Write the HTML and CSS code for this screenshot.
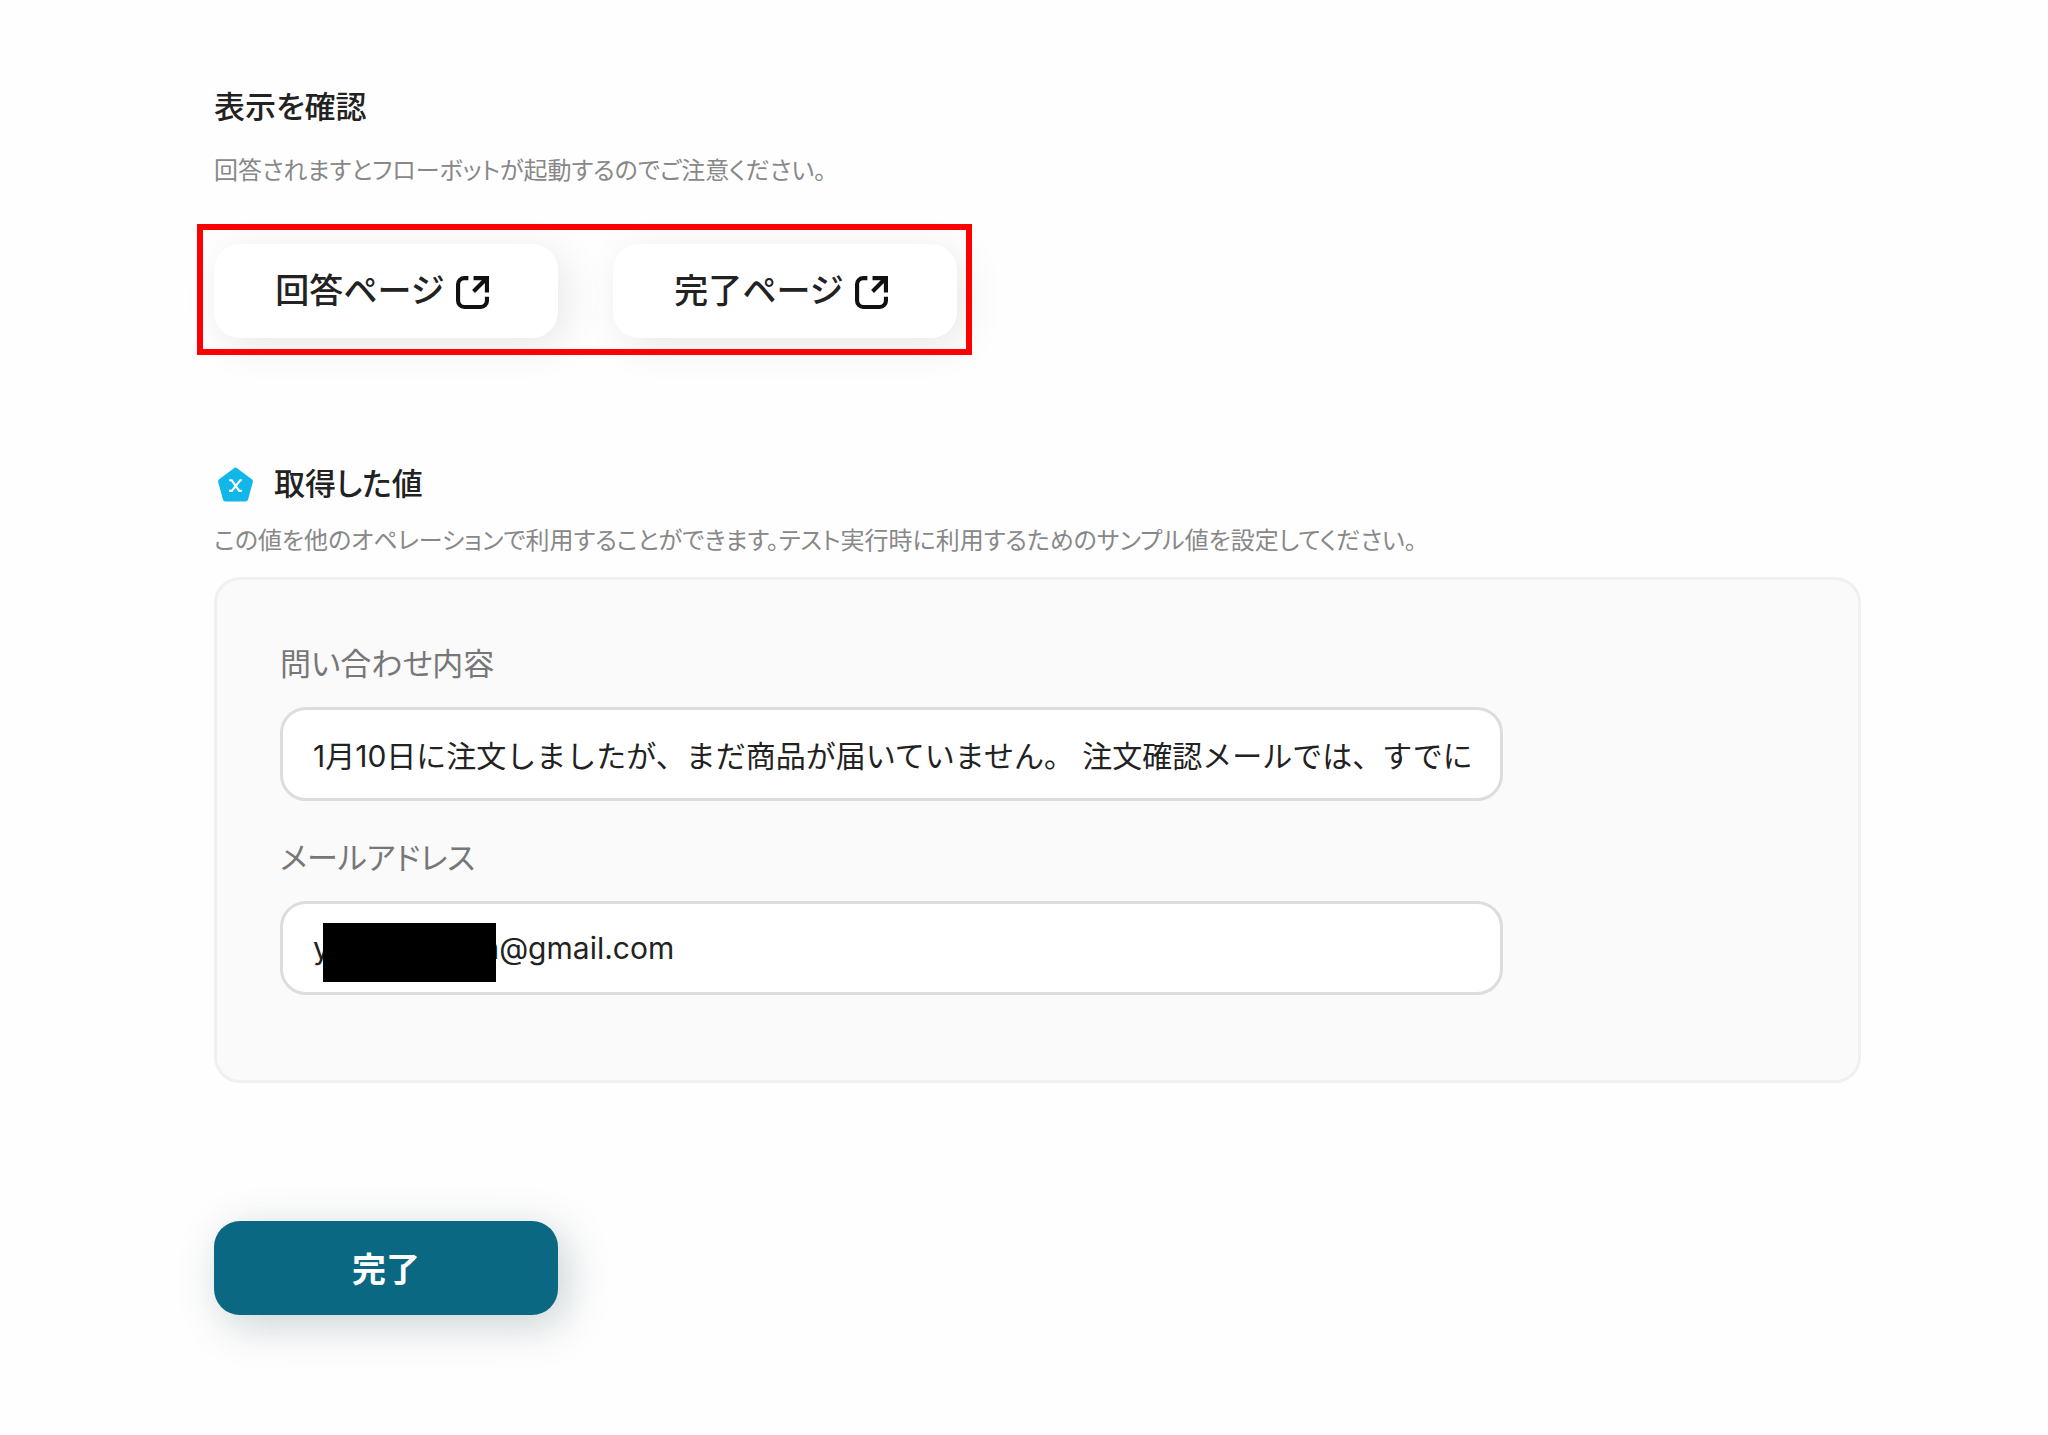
FILE: index.html
```html
<!DOCTYPE html>
<html lang="ja">
<head>
  <meta charset="UTF-8">
  <title>表示を確認</title>
  <link rel="stylesheet" href="styles.css">
</head>
<body>
  <main class="container">
    <section class="preview">
      <h2 class="title">表示を確認</h2>
      <p class="description">回答されますとフローボットが起動するのでご注意ください。</p>
      <div class="links">
        <button type="button" class="button link">
          回答ページ
          <svg class="icon-open" viewBox="0 0 32 32" aria-hidden="true">
            <path d="M12 2H8a6 6 0 0 0-6 6v16a6 6 0 0 0 6 6h16a6 6 0 0 0 6-6v-4M17 2h13v14M30 2L17 15"/>
          </svg>
        </button>
        <button type="button" class="button link">
          完了ページ
          <svg class="icon-open" viewBox="0 0 32 32" aria-hidden="true">
            <path d="M12 2H8a6 6 0 0 0-6 6v16a6 6 0 0 0 6 6h16a6 6 0 0 0 6-6v-4M17 2h13v14M30 2L17 15"/>
          </svg>
        </button>
      </div>
    </section>

    <section class="values">
      <h2 class="title">
        <svg class="icon-value" viewBox="0 0 36 36" aria-hidden="true">
          <path class="shape" d="M18 5L32 15.500L27.500 32H8.500L4 15.500Z"/>
          <path class="cross" d="M12 14.500h2.500l7 10H24M24 14.500h-1.500l-8 10H12"/>
        </svg>
        取得した値
      </h2>
      <p class="description">この値を他のオペレーションで利用することができます。テスト実行時に利用するためのサンプル値を設定してください。</p>
      <div class="panel">
        <div class="field">
          <label for="inquiry">問い合わせ内容</label>
          <input type="text" id="inquiry" value="1月10日に注文しましたが、まだ商品が届いていません。 注文確認メールでは、すでに">
        </div>
        <div class="field">
          <label for="email">メールアドレス</label>
          <div class="masked">
            <input type="text" id="email" value="yxxxxxxooon@gmail.com">
            <span class="mask"></span>
          </div>
        </div>
      </div>
    </section>

    <button type="submit" class="button primary">完了</button>
  </main>
</body>
</html>
```

FILE: styles.css
```css
* {
  box-sizing: border-box;
}

body {
  margin: 0;
  background-color: #fefefe;
  color: #222;
  font-family: Inter, "Noto Sans CJK JP", sans-serif;
  font-feature-settings: "palt";
}

.container {
  padding: 85px 187px 120px 214px;
}

.title {
  display: flex;
  align-items: center;
  gap: 17px;
  margin: 0;
  font-size: 31px;
  font-weight: 500;
  line-height: 44px;
}

.description {
  margin: 0;
  color: #888;
  font-size: 24px;
  line-height: 36px;
}

.preview .description {
  margin-top: 24px;
}

/* page links, framed in red */
.links {
  position: relative;
  display: flex;
  gap: 55px;
  width: fit-content;
  margin-top: 55px;
}

.links::after {
  content: "";
  position: absolute;
  inset: -20px -15px -17px -17px;
  border: 6px solid #f00;
  pointer-events: none;
}

.button {
  display: flex;
  justify-content: center;
  align-items: center;
  gap: 12px;
  width: 344px;
  height: 94px;
  padding: 0 0 2px;
  border: none;
  border-radius: 26px;
  background-color: #fff;
  box-shadow: 8px 8px 40px rgba(0, 0, 0, 0.09);
  color: #222;
  font: inherit;
  font-size: 34px;
  font-weight: 500;
  cursor: pointer;
}

.link {
  padding: 0 8px 6px 0;
}

.icon-open {
  width: 33px;
  height: 33px;
  margin-top: 9px;
  fill: none;
  stroke: #111;
  stroke-width: 4;
}

.values {
  margin-top: 124px;
}

.values .description {
  margin-top: 17px;
}

.icon-value {
  width: 43px;
  height: 38px;
}

.icon-value .shape {
  fill: #12b7ea;
  stroke: #12b7ea;
  stroke-width: 5;
  stroke-linejoin: round;
}

.icon-value .cross {
  fill: none;
  stroke: #fff;
  stroke-width: 2;
}

.panel {
  display: flex;
  flex-direction: column;
  gap: 35px;
  margin-top: 18px;
  padding: 62px 355px 85px 63px;
  border: 3px solid #f0f0f0;
  border-radius: 26px;
  background-color: #fafafa;
}

.field label {
  display: block;
  margin-bottom: 21px;
  color: #777;
  font-size: 31px;
  line-height: 44px;
}

.field input {
  display: block;
  width: 100%;
  height: 94px;
  padding: 0 30px;
  border: 3px solid #ddd;
  border-radius: 26px;
  background-color: #fff;
  color: #222;
  font: inherit;
  font-size: 30px;
  font-feature-settings: normal;
}

.masked {
  position: relative;
}

.mask {
  position: absolute;
  top: 22px;
  left: 43px;
  width: 173px;
  height: 59px;
  background-color: #000;
}

.primary {
  margin-top: 138px;
  background-color: #0a6882;
  box-shadow: 8px 10px 44px rgba(10, 50, 65, 0.22);
  color: #fff;
  font-weight: 700;
}
```
